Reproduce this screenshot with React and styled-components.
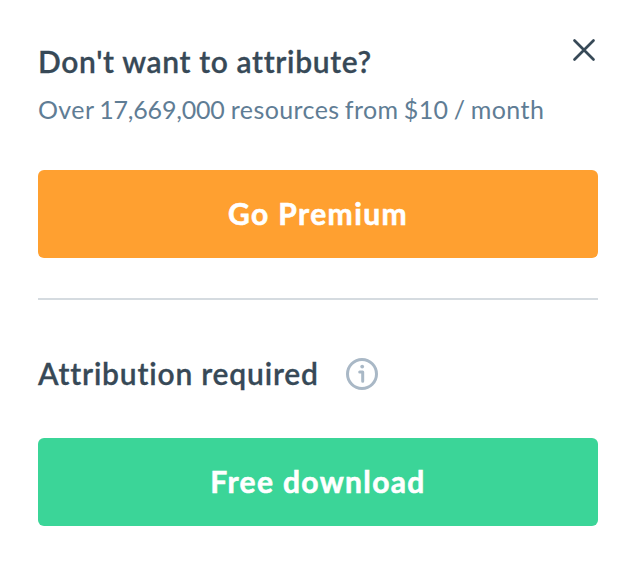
import React from "react";
import styled, { createGlobalStyle } from "styled-components";

const GlobalStyle = createGlobalStyle`
  * {
    box-sizing: border-box;
  }

  body {
    margin: 0;
    background: #ffffff;
    font-family: Lato, "Open Sans", sans-serif;
    font-variant-ligatures: none;
  }
`;

const Panel = styled.main`
  width: 636px;
  height: 564px;
  padding: 38px 38px 0;
  background: #ffffff;
`;

const Header = styled.header`
  display: flex;
  justify-content: space-between;
  align-items: flex-start;
  height: 132px;
`;

const Title = styled.h2`
  margin: 0;
  color: #374957;
  font-size: 30px;
  font-weight: 600;
  line-height: 46px;
  letter-spacing: ${({ $tracking }) => $tracking || "0"};
  -webkit-text-stroke: 0.3px #374957;
  white-space: nowrap;
`;

const Subtitle = styled.p`
  margin: 0;
  color: #5f7d95;
  font-size: 25px;
  line-height: 50px;
  letter-spacing: 0.4px;
  word-spacing: -1.5px;
  white-space: nowrap;
`;

const Count = styled.span`
  margin-right: 1px;
  letter-spacing: -0.2px;
`;

const CloseButton = styled.button`
  display: flex;
  flex: none;
  margin: 0 2px 0 0;
  padding: 0;
  border: 0;
  background: none;
  cursor: pointer;
`;

const Button = styled.button`
  display: flex;
  justify-content: center;
  width: 100%;
  height: 88px;
  padding: 0;
  border: 0;
  border-radius: 6px;
  background: ${({ $color }) => $color};
  color: #ffffff;
  font-family: inherit;
  font-size: 30px;
  font-weight: 700;
  line-height: 86px;
  letter-spacing: ${({ $tracking }) => $tracking || "0"};
  -webkit-text-stroke: 0.6px #ffffff;
  cursor: pointer;
`;

const Divider = styled.hr`
  height: 2px;
  margin: 40px 0 50px;
  border: 0;
  background: #d5dbe0;
`;

const Attribution = styled.div`
  display: flex;
  height: 48px;
  margin-bottom: 40px;
`;

const TitleSlot = styled.div`
  width: 308px;
`;

const CloseIcon = () => (
  <svg width="24" height="24" viewBox="0 0 24 24" fill="none">
    <path
      d="M2.5 2.5 21.5 21.5M21.5 2.5 2.5 21.5"
      stroke="#374957"
      strokeWidth="2.7"
      strokeLinecap="round"
    />
  </svg>
);

const InfoIcon = () => (
  <svg width="32" height="48" viewBox="0 -8 32 48" fill="none">
    <circle cx="16" cy="16" r="14.5" stroke="#a9b8c6" strokeWidth="3" />
    <circle cx="16.2" cy="8.6" r="1.9" fill="#a9b8c6" />
    <path
      d="M13.7 14H16.7V23.2"
      stroke="#a9b8c6"
      strokeWidth="3"
      strokeLinecap="round"
      strokeLinejoin="round"
    />
  </svg>
);

const App = () => {
  return (
    <>
      <GlobalStyle />
      <Panel>
        <Header>
          <div>
            <Title $tracking="0.65px">Don't want to attribute?</Title>
            <Subtitle>
              Over <Count>17,669,000</Count> resources from $10 / month
            </Subtitle>
          </div>
          <CloseButton aria-label="Close">
            <CloseIcon />
          </CloseButton>
        </Header>
        <Button $color="#ffa030" $tracking="1.4px">
          Go Premium
        </Button>
        <Divider />
        <Attribution>
          <TitleSlot>
            <Title $tracking="0.8px">Attribution required</Title>
          </TitleSlot>
          <InfoIcon />
        </Attribution>
        <Button $color="#3bd598" $tracking="1.35px">
          Free download
        </Button>
      </Panel>
    </>
  );
};

export default App;
